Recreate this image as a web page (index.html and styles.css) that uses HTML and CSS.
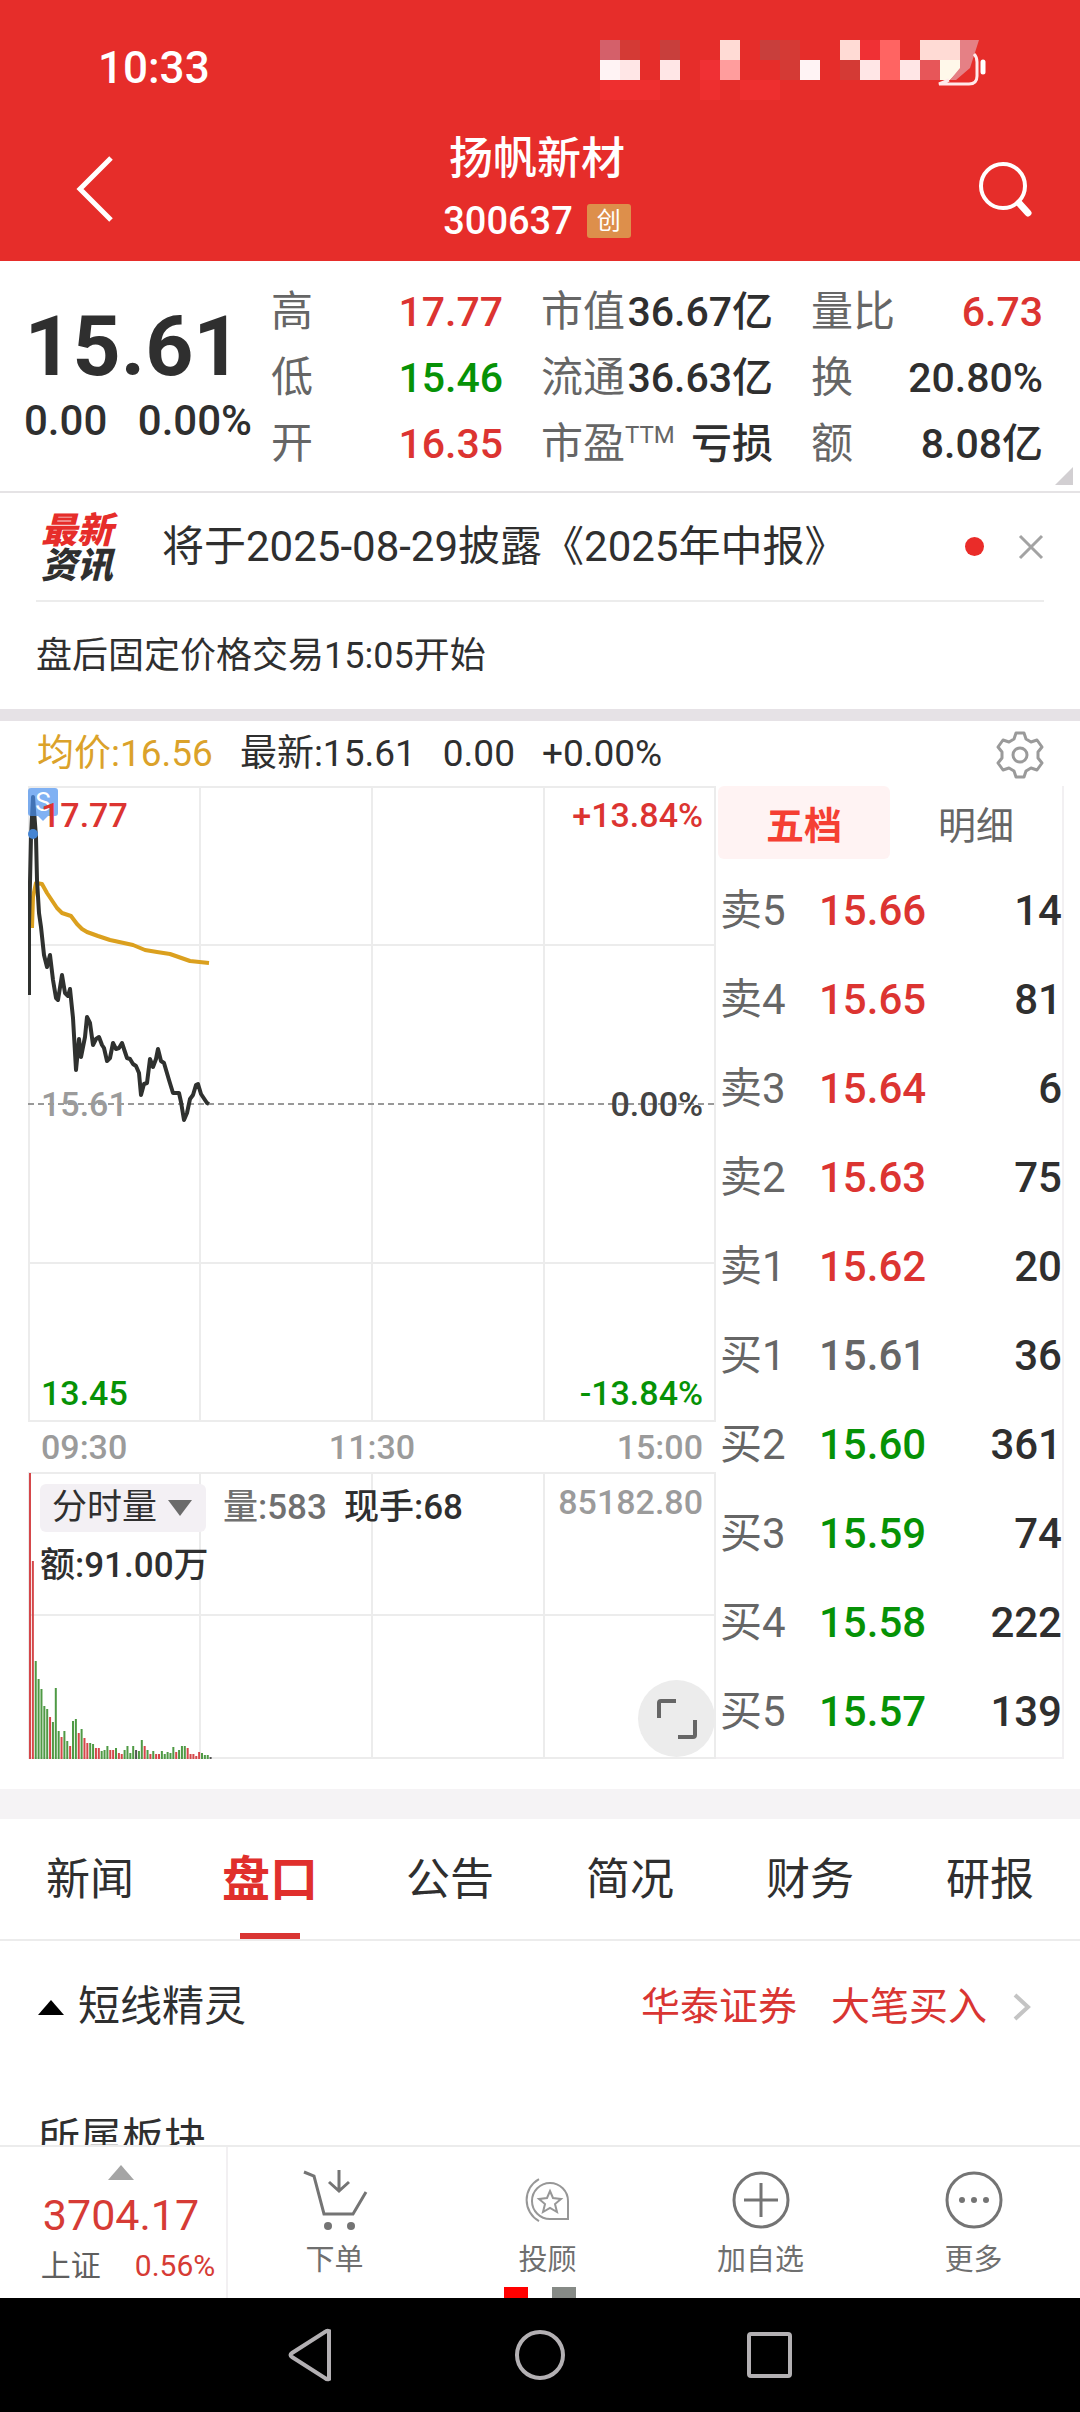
FILE: index.html
```html
<!DOCTYPE html>
<html lang="zh-CN">

<head>
    <meta charset="UTF-8">
    <meta name="viewport" content="width=device-width, initial-scale=1.0">
    <title>扬帆新材 300637</title>
    <link rel="stylesheet" href="styles.css">
</head>

<body>
    <header class="header">
        <div class="status-bar">
            <span>10:33</span>
            <svg class="status-icons" width="390" height="64" viewBox="0 0 390 64" shape-rendering="crispEdges">
                <path fill="#d4606a" d="M0 0h20v20H0z" />
                <path fill="#d43a35" d="M20 0h20v20H20zM180 0h20v20h-20zM180 20h20v20h-20zM240 20h20v20h-20z" />
                <path fill="#c83f3c" d="M60 0h20v20H60zM160 0h20v20h-20z" />
                <path fill="#ffdbd5" d="M120 0h20v20h-20zM240 0h20v20h-20zM320 0h40v20h-40z" />
                <path fill="#f03034" d="M260 0h20v20h-20zM100 20h20v20h-20z" />
                <path fill="#ee2f2f" d="M0 40h60v20H0zM100 40h20v20h-20zM140 40h40v20h-40z" />
                <path fill="#ff6462" d="M280 0h20v20h-20zM280 20h20v20h-20z" />
                <path fill="#fff3f4" d="M0 20h20v20H0zM200 20h20v20h-20z" />
                <path fill="#ffe6e6" d="M20 20h20v20H20zM60 20h20v20H60zM260 20h20v20h-20zM300 20h20v20h-20z" />
                <path fill="#ff9d9d" d="M120 20h20v20h-20z" />
                <path fill="#e75659" d="M320 20h20v20h-20z" />
                <g shape-rendering="auto">
                    <path fill="#fff8ea" d="M340 20h20v10l-10 10h-10z" />
                    <path fill="#e58085" d="M360 0h19l-9 28-14 12h-6l10-12z" />
                    <path fill="none" stroke="#ffe9ea" stroke-width="3" d="M374 14q3 3 3 8v14q0 8-8 8h-30l10-4" />
                    <path stroke="#fff" stroke-width="5" stroke-linecap="round" d="M383 22v10" />
                </g>
            </svg>
        </div>
        <div class="title-bar">
            <button type="button" class="icon-btn" aria-label="返回">
                <svg width="44" height="70" viewBox="0 0 44 70" fill="none" stroke="#fff" stroke-width="5">
                    <path d="M41 4L10 35l31 31" />
                </svg>
            </button>
            <div class="title">
                <h1>扬帆新材</h1>
                <div class="code">300637 <span class="board">创</span></div>
            </div>
            <button type="button" class="icon-btn search" aria-label="搜索">
                <svg width="56" height="56" viewBox="0 0 56 56" fill="none" stroke="#fff">
                    <circle cx="25" cy="25" r="22" stroke-width="4" />
                    <path d="M41 42l9 10" stroke-width="7" stroke-linecap="round" />
                </svg>
            </button>
        </div>
    </header>

    <main class="content">
        <section class="quote">
            <div class="price">
                <strong>15.61</strong>
                <div class="change"><span>0.00</span><span>0.00%</span></div>
            </div>
            <dl class="stats">
                <div><dt>高</dt><dd class="up">17.77</dd></div>
                <div><dt>市值</dt><dd>36.67亿</dd></div>
                <div><dt>量比</dt><dd class="up">6.73</dd></div>
                <div><dt>低</dt><dd class="down">15.46</dd></div>
                <div><dt>流通</dt><dd>36.63亿</dd></div>
                <div><dt>换</dt><dd>20.80%</dd></div>
                <div><dt>开</dt><dd class="up">16.35</dd></div>
                <div><dt>市盈<sup>TTM</sup></dt><dd>亏损</dd></div>
                <div><dt>额</dt><dd>8.08亿</dd></div>
            </dl>
        </section>

        <section class="notices">
            <div class="notice">
                <div class="news-logo"><span>最新</span><span>资讯</span></div>
                <a href="#">将于2025-08-29披露《2025年中报》</a>
                <i class="dot"></i>
                <button type="button" class="icon-btn" aria-label="关闭">
                    <svg width="26" height="26" viewBox="0 0 26 26" stroke="#a3a3a3" stroke-width="3">
                        <path d="M2 2l22 22M24 2L2 24" />
                    </svg>
                </button>
            </div>
            <p>盘后固定价格交易15:05开始</p>
        </section>

        <section class="trade">
            <div class="trade-info">
                <span class="avg">均价:16.56</span>
                <span>最新:15.61</span>
                <span>0.00</span>
                <span>+0.00%</span>
                <button type="button" class="icon-btn" aria-label="设置">
                    <svg width="48" height="48" viewBox="0 0 48 48" fill="none" stroke="#9a9a9a" stroke-width="3" stroke-linejoin="round">
                        <path d="M20 2h8l2 6 5 3 6-2 5 7-4 5v6l4 5-5 7-6-2-5 3-2 6h-8l-2-6-5-3-6 2-5-7 4-5v-6l-4-5 5-7 6 2 5-3z" />
                        <circle cx="24" cy="24" r="7" />
                    </svg>
                </button>
            </div>

            <div class="trade-body">
                <div class="charts">
                    <div class="chart">
                        <svg class="price-chart" viewBox="0 0 688 636" preserveAspectRatio="none" fill="none">
                            <path class="grid" d="M1 1h686v634H1zM172 0v636M344 0v636M516 0v636M0 159h688M0 477h688" />
                            <path class="base" d="M0 318h688" />
                            <polyline class="avg-line" points="4,142 5,111 8,97 14,98 19,107 25,116 29,122 34,127 43,130 49,138 54,143 59,146 70,150 82,154 105,159 117,164 129,166 142,168 162,175 181,177" />
                            <polyline class="price-line" points="1,209 1,141 3,51 5,11 8,51 9,94 11,127 13,141 16,169 19,181 22,169 25,194 28,212 30,214 34,189 37,207 40,210 42,203 45,232 48,284 51,253 53,271 57,251 59,231 62,237 65,259 68,253 71,251 74,259 76,262 79,275 82,272 85,257 88,263 91,262 94,257 96,263 99,272 102,273 105,278 108,280 111,287 113,309 116,298 119,297 122,273 125,281 128,273 130,263 133,275 136,277 141,294 145,307 151,307 153,316 156,334 159,327 162,313 165,309 168,299 170,298 173,308 179,317 181,318" />
                            <circle cx="5" cy="48" r="5" fill="#4584d2" />
                        </svg>
                        <span class="sell-mark">S</span>
                        <div class="scale">
                            <div class="up"><span>17.77</span><span>+13.84%</span></div>
                            <div class="flat"><span>15.61</span><span>0.00%</span></div>
                            <div class="down"><span>13.45</span><span>-13.84%</span></div>
                        </div>
                    </div>
                    <div class="times"><span>09:30</span><span>11:30</span><span>15:00</span></div>
                    <div class="chart">
                        <svg class="volume-chart" id="volume" viewBox="0 0 688 287" preserveAspectRatio="none" fill="none">
                            <path class="grid" d="M1 1h686v285H1zM172 0v287M344 0v287M516 0v287M0 143h688" />
                        </svg>
                        <div class="volume-info">
                            <label class="indicator">
                                <select aria-label="指标">
                                    <option>分时量</option>
                                </select>
                            </label>
                            <span class="muted">量:583</span>
                            <span>现手:68</span>
                            <span class="max">85182.80</span>
                            <span class="amount">额:91.00万</span>
                        </div>
                        <button type="button" class="expand" aria-label="全屏">
                            <svg width="42" height="42" viewBox="0 0 42 42" fill="none" stroke="#666" stroke-width="4">
                                <path d="M3 20V5q0-2 2-2h15M39 22v15q0 2-2 2H22" />
                            </svg>
                        </button>
                    </div>
                </div>

                <div class="orders">
                    <div class="order-tabs">
                        <button type="button" class="active">五档</button>
                        <button type="button">明细</button>
                    </div>
                    <table>
                        <tr><th>卖5</th><td class="up">15.66</td><td>14</td></tr>
                        <tr><th>卖4</th><td class="up">15.65</td><td>81</td></tr>
                        <tr><th>卖3</th><td class="up">15.64</td><td>6</td></tr>
                        <tr><th>卖2</th><td class="up">15.63</td><td>75</td></tr>
                        <tr><th>卖1</th><td class="up">15.62</td><td>20</td></tr>
                        <tr><th>买1</th><td class="even">15.61</td><td>36</td></tr>
                        <tr><th>买2</th><td class="down">15.60</td><td>361</td></tr>
                        <tr><th>买3</th><td class="down">15.59</td><td>74</td></tr>
                        <tr><th>买4</th><td class="down">15.58</td><td>222</td></tr>
                        <tr><th>买5</th><td class="down">15.57</td><td>139</td></tr>
                    </table>
                </div>
            </div>
        </section>

        <nav class="tabs">
            <a href="#">新闻</a>
            <a href="#" class="active">盘口</a>
            <a href="#">公告</a>
            <a href="#">简况</a>
            <a href="#">财务</a>
            <a href="#">研报</a>
        </nav>

        <section class="panel">
            <div class="panel-row">
                <i class="triangle"></i>
                <h2>短线精灵</h2>
                <a href="#" class="alerts">
                    <span>华泰证券</span>
                    <span>大笔买入</span>
                    <svg width="20" height="28" viewBox="0 0 20 28" fill="none" stroke="#c4c4c4" stroke-width="4">
                        <path d="M3 2l13 12L3 26" />
                    </svg>
                </a>
            </div>
            <div class="panel-row">
                <h2>所属板块</h2>
            </div>
        </section>
    </main>

    <footer class="toolbar">
        <a href="#" class="index">
            <i class="triangle"></i>
            <strong>3704.17</strong>
            <span class="index-info"><span>上证</span><em>0.56%</em></span>
        </a>
        <button type="button">
            <svg width="66" height="60" viewBox="0 0 66 60" fill="none" stroke="#747474" stroke-width="3">
                <path d="M2 2l10 4 10 38h29l13-22M37 0v20M27 12l10 9 10-9" />
                <circle cx="26" cy="56" r="4" fill="#747474" stroke="none" />
                <circle cx="49" cy="56" r="4" fill="#747474" stroke="none" />
            </svg>
            下单
        </button>
        <button type="button">
            <svg width="60" height="60" viewBox="0 0 60 60" fill="none" stroke="#979797" stroke-width="2">
                <path d="M50 49H32a18 18 0 1 1 18-18zM21 9a24 24 0 0 0 0 42" />
                <path d="M32 21l3 7 8 1-6 5 2 8-7-4-7 4 2-8-6-5 8-1z" />
            </svg>
            投顾
        </button>
        <button type="button">
            <svg width="60" height="60" viewBox="0 0 60 60" fill="none" stroke="#747474" stroke-width="3">
                <circle cx="30" cy="30" r="27" />
                <path d="M30 13v34M13 30h34" />
            </svg>
            加自选
        </button>
        <button type="button">
            <svg width="60" height="60" viewBox="0 0 60 60" fill="none" stroke="#747474" stroke-width="3">
                <circle cx="30" cy="30" r="27" />
                <g fill="#747474" stroke="none">
                    <circle cx="18" cy="30" r="3" />
                    <circle cx="30" cy="30" r="3" />
                    <circle cx="42" cy="30" r="3" />
                </g>
            </svg>
            更多
        </button>
        <div class="pager"><i></i><i></i></div>
    </footer>

    <div class="system-nav">
        <svg width="48" height="54" viewBox="0 0 48 54"><path d="M42 3v48q-2 1-4-1L5 29q-3-2 0-4L38 4q2-2 4-1z" /></svg>
        <svg width="54" height="54" viewBox="0 0 54 54"><circle cx="27" cy="27" r="23" /></svg>
        <svg width="48" height="54" viewBox="0 0 48 54"><rect x="4" y="6" width="41" height="42" rx="2" /></svg>
    </div>

    <script>
        // one bar per minute, 240 minutes in a session
        const volumes = [286, 198, 98, 80, 70, 53, 50, 42, 37, 71, 28, 22, 28, 18, 13, 38, 40, 26, 30, 21, 16, 16,
            15, 11, 11, 8, 9, 13, 9, 9, 11, 6, 5, 9, 13, 6, 13, 9, 8, 19, 13, 9, 5, 8, 5, 5, 8, 5, 7, 6, 12, 7, 9,
            13, 13, 11, 5, 5, 3, 7, 6, 4, 4, 2];
        const sides = 'rrgggggrgggrggrggrgrrggrrgggrrgrrggggkggrgrgrrgggggrgggrrrrrgggk';
        const colors = { r: '#d5474a', g: '#4f9a45', k: '#555' };
        const svg = document.getElementById('volume');

        volumes.forEach(function (v, i) {
            const bar = document.createElementNS('http://www.w3.org/2000/svg', 'rect');
            bar.setAttribute('x', 1 + i * 688 / 240);
            bar.setAttribute('y', 287 - v);
            bar.setAttribute('width', 2);
            bar.setAttribute('height', v);
            bar.setAttribute('fill', colors[sides[i]]);
            svg.appendChild(bar);
        });
    </script>
</body>

</html>
```
FILE: styles.css
```css
* {
    box-sizing: border-box;
}

body {
    display: flex;
    flex-direction: column;
    height: 100vh;
    margin: 0;
    font-family: Roboto, "Noto Sans CJK SC", sans-serif;
    line-height: 1.2;
    color: #2f2f2f;
    background-color: #fff;
}

h1,
h2,
p,
dl,
dd {
    margin: 0;
}

a {
    color: inherit;
    text-decoration: none;
}

button {
    padding: 0;
    font-family: inherit;
    color: inherit;
    background: none;
    border: none;
    cursor: pointer;
}

svg {
    display: block;
}

.up {
    color: #dc3431;
}

.down {
    color: #069206;
}

.even {
    color: #666;
}

/* header */
.header {
    flex: none;
    color: #fff;
    background-color: #e62d2a;
}

.status-bar {
    display: flex;
    justify-content: space-between;
    height: 132px;
    padding: 40px 90px 0 98px;
    font-size: 44px;
    line-height: 56px;
    font-weight: 500;
}

.title-bar {
    display: flex;
    justify-content: space-between;
    align-items: center;
    height: 129px;
    padding: 0 46px 16px 70px;
}

.title {
    text-align: center;
}

.title h1 {
    font-size: 44px;
    line-height: 64px;
    font-weight: 500;
}

.code {
    display: flex;
    align-items: center;
    justify-content: center;
    gap: 14px;
    font-size: 38px;
    line-height: 60px;
    font-weight: 500;
}

.board {
    padding: 0 10px;
    font-size: 24px;
    line-height: 34px;
    font-weight: 400;
    background-color: #dd8f4b;
    border-radius: 3px;
}

.search {
    display: flex;
    justify-content: flex-end;
    width: 74px;
}

/* main column */
.content {
    flex: 1;
    min-height: 0;
    overflow: hidden;
}

.quote {
    position: relative;
    display: flex;
    height: 232px;
    padding: 18px 37px 0 20px;
    border-bottom: 2px solid #e5e3e5;
}

.quote::after {
    content: "";
    position: absolute;
    right: 7px;
    bottom: 6px;
    border: 9px solid;
    border-color: transparent #d2cfd2 #d2cfd2 transparent;
}

.price {
    width: 236px;
    margin-right: 15px;
    padding-top: 20px;
    text-align: center;
}

.price strong {
    display: block;
    padding-right: 10px;
    font-size: 84px;
    line-height: 96px;
    font-weight: 700;
}

.change {
    display: flex;
    justify-content: space-between;
    padding: 0 4px;
    font-size: 42px;
    line-height: 52px;
    font-weight: 500;
}

.stats {
    flex: 1;
    display: grid;
    grid-template-columns: repeat(3, 1fr);
    grid-auto-rows: 66px;
    column-gap: 38px;
    line-height: 66px;
}

.stats div {
    display: flex;
    justify-content: space-between;
    white-space: nowrap;
}

.stats dt {
    font-size: 42px;
    color: #666;
}

.stats dd {
    font-size: 41px;
    font-weight: 500;
}

.stats sup {
    font-size: 24px;
    line-height: 0;
}

.notices {
    padding: 0 36px;
    border-bottom: 12px solid #e6e2e6;
}

.notice {
    display: flex;
    align-items: center;
    height: 109px;
    border-bottom: 2px solid #ececec;
}

.notice a {
    flex: 1;
    padding-top: 2px;
    font-size: 42px;
}

.news-logo {
    width: 126px;
    padding-top: 4px;
    padding-left: 5px;
    font-size: 36px;
    line-height: 35px;
    font-weight: 900;
    font-style: italic;
}

.news-logo span {
    display: block;
}

.news-logo span:first-child {
    color: #e62d2a;
}

.dot {
    width: 19px;
    height: 19px;
    margin-right: 34px;
    background-color: #ea2c29;
    border-radius: 50%;
}

.notices p {
    padding-top: 2px;
    font-size: 36px;
    line-height: 105px;
}

/* intraday chart */
.trade {
    padding: 0 16px 30px 28px;
    border-bottom: 30px solid #f5f3f5;
}

.trade-info {
    display: flex;
    align-items: center;
    gap: 27px;
    height: 65px;
    padding: 2px 20px 0 9px;
    font-size: 37px;
}

.trade-info .avg {
    color: #dba22a;
}

.trade-info .icon-btn {
    margin-left: auto;
}

.trade-body {
    display: grid;
    grid-template-columns: 688fr 348fr;
}

.chart {
    position: relative;
}

.chart > svg {
    width: 100%;
}

.price-chart {
    height: 636px;
}

.volume-chart {
    height: 287px;
}

.grid {
    stroke: #ececec;
    stroke-width: 2;
}

.base {
    stroke: #999;
    stroke-width: 2;
    stroke-dasharray: 6 4;
}

.avg-line {
    stroke: #dba01e;
    stroke-width: 4;
    stroke-linejoin: round;
}

.price-line {
    stroke: #2f312f;
    stroke-width: 4;
    stroke-linejoin: round;
}

.scale {
    position: absolute;
    inset: 8px 13px;
    display: flex;
    flex-direction: column;
    justify-content: space-between;
    font-size: 34px;
    line-height: 42px;
    font-weight: 500;
}

.scale div {
    display: flex;
    justify-content: space-between;
}

.flat {
    color: #444;
}

.flat span:first-child {
    color: #9b9b9b;
}

.sell-mark {
    position: absolute;
    top: 2px;
    left: 0;
    width: 30px;
    font-size: 26px;
    line-height: 28px;
    text-align: center;
    color: #fff;
    background-color: rgba(74, 144, 238, 0.7);
    border-radius: 3px;
}

.sell-mark::after {
    content: "";
    position: absolute;
    top: 100%;
    left: 10px;
    border: 5px solid transparent;
    border-top-color: #80b1f3;
    border-bottom: none;
}

.times {
    display: flex;
    justify-content: space-between;
    padding: 0 13px;
    font-size: 34px;
    line-height: 50px;
    font-weight: 500;
    color: #9b9b9b;
}

.volume-info {
    position: absolute;
    inset: 7px 13px auto 12px;
    display: flex;
    flex-wrap: wrap;
    align-items: center;
    column-gap: 17px;
    font-size: 35px;
    line-height: 58px;
    font-weight: 500;
}

.indicator {
    display: flex;
    align-items: center;
    padding-right: 14px;
    background-color: #f3f0f4;
    border-radius: 6px;
}

.indicator::after {
    content: "";
    border: 12px solid transparent;
    border-top: 16px solid #6b6b6b;
    border-bottom: none;
}

.indicator select {
    appearance: none;
    height: 48px;
    padding: 0 10px 0 12px;
    font: inherit;
    font-weight: 400;
    line-height: 48px;
    color: inherit;
    background: none;
    border: none;
}

.muted {
    color: #707070;
}

.max {
    align-self: flex-start;
    margin-left: auto;
    font-size: 34px;
    line-height: 46px;
    color: #9b9b9b;
}

.amount {
    width: 100%;
}

.expand {
    position: absolute;
    right: 1px;
    bottom: 2px;
    display: flex;
    align-items: center;
    justify-content: center;
    width: 77px;
    height: 77px;
    background-color: #ececec;
    border-radius: 50%;
}

/* order book */
.orders {
    padding-left: 2px;
    border-right: 2px solid #f2f0f2;
    border-bottom: 2px solid #f2f0f2;
}

.order-tabs {
    display: grid;
    grid-template-columns: 1fr 1fr;
    height: 80px;
    padding-bottom: 7px;
}

.order-tabs button {
    font-size: 38px;
    color: #666;
    border-radius: 6px;
}

.order-tabs .active {
    font-weight: 700;
    color: #f53f33;
    background-color: #fff3f3;
}

.orders table {
    width: 100%;
    border-collapse: collapse;
    font-size: 42px;
    line-height: 89px;
}

.orders th,
.orders td {
    padding: 0;
}

.orders th {
    width: 101px;
    padding-left: 2px;
    font-weight: 400;
    color: #666;
    text-align: left;
}

.orders td {
    font-weight: 500;
}

.orders td:last-child {
    text-align: right;
}

/* tabs */
.tabs {
    display: grid;
    grid-template-columns: repeat(6, 1fr);
    border-bottom: 2px solid #ececec;
}

.tabs a {
    display: flex;
    flex-direction: column;
    align-items: center;
    height: 120px;
    font-size: 44px;
    line-height: 122px;
}

.tabs .active {
    font-size: 48px;
    font-weight: 700;
    color: #e02f2c;
}

.tabs .active::after {
    content: "";
    flex: none;
    width: 60px;
    height: 6px;
    margin-top: -8px;
    background-color: #d93532;
}

.panel {
    padding: 0 48px 0 38px;
}

.panel-row {
    display: flex;
    align-items: center;
    height: 132px;
}

.triangle {
    border: 13px solid transparent;
    border-top: none;
    border-bottom: 15px solid #000;
}

.panel-row .triangle {
    margin-right: 14px;
}

.panel-row h2 {
    font-size: 42px;
    font-weight: 400;
}

.alerts {
    display: flex;
    align-items: center;
    margin-left: auto;
    font-size: 39px;
    color: #d93532;
}

.alerts span {
    margin-right: 34px;
}

.alerts span + span {
    margin-right: 25px;
}

/* bottom bar */
.toolbar {
    position: relative;
    flex: none;
    display: grid;
    grid-template-columns: 228fr repeat(4, 213fr);
    height: 153px;
    border-top: 2px solid #ececec;
}

.index {
    display: flex;
    flex-direction: column;
    align-items: center;
    padding-top: 18px;
    padding-left: 16px;
    color: #d63b35;
    border-right: 2px solid #f2f0f2;
}

.index .triangle {
    border-bottom-color: #a5a5a5;
}

.index strong {
    font-size: 43px;
    line-height: 70px;
    font-weight: 400;
}

.index-info {
    display: flex;
    gap: 34px;
    padding-left: 14px;
    font-size: 30px;
    line-height: 32px;
}

.index-info span {
    color: #5f5f5f;
}

.index-info em {
    font-style: normal;
}

.toolbar button {
    display: flex;
    flex-direction: column;
    align-items: center;
    gap: 10px;
    padding-top: 23px;
    font-size: 29px;
    line-height: 40px;
    color: #6f6f6f;
}

.pager {
    position: absolute;
    bottom: 0;
    left: 50%;
    display: flex;
    gap: 24px;
    margin-left: -36px;
}

.pager i {
    width: 24px;
    height: 11px;
    background-color: #868a86;
}

.pager i:first-child {
    background-color: #f00;
}

.system-nav {
    flex: none;
    display: flex;
    justify-content: center;
    align-items: center;
    gap: 178px;
    height: 114px;
    background-color: #000;
}

.system-nav svg {
    fill: none;
    stroke: #b3b0b3;
    stroke-width: 4;
}
```
